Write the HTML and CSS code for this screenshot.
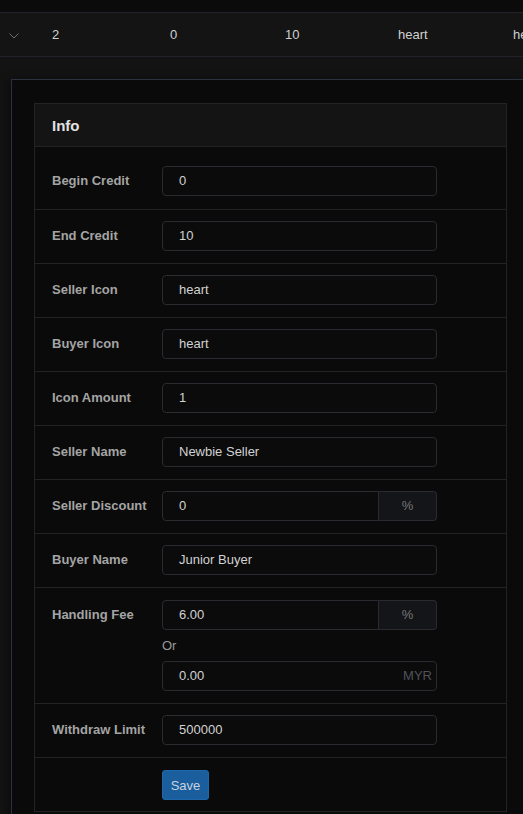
FILE: index.html
```html
<!DOCTYPE html>
<html>
<head>
<meta charset="utf-8">
<link rel="stylesheet" href="styles.css">
</head>
<body>
<div class="topbar"></div>
<div class="tablerow">
  <div class="cell chev"><svg width="10" height="6" viewBox="0 0 10 6"><path d="M0.5 0.5 L5 5 L9.5 0.5" fill="none" stroke="#6a6e75" stroke-width="1"/></svg></div>
  <div class="cell">2</div>
  <div class="cell">0</div>
  <div class="cell">10</div>
  <div class="cell">heart</div>
  <div class="cell">heart</div>
</div>
<div class="area">
  <div class="panel">
    <div class="card">
      <div class="card-head">Info</div>
      <div class="card-body">
        <div class="frow first"><label class="lbl">Begin Credit</label><div class="ctrl"><div class="inp">0</div></div></div>
        <div class="frow"><label class="lbl">End Credit</label><div class="ctrl"><div class="inp">10</div></div></div>
        <div class="frow"><label class="lbl">Seller Icon</label><div class="ctrl"><div class="inp">heart</div></div></div>
        <div class="frow"><label class="lbl">Buyer Icon</label><div class="ctrl"><div class="inp">heart</div></div></div>
        <div class="frow"><label class="lbl">Icon Amount</label><div class="ctrl"><div class="inp">1</div></div></div>
        <div class="frow"><label class="lbl">Seller Name</label><div class="ctrl"><div class="inp">Newbie Seller</div></div></div>
        <div class="frow"><label class="lbl">Seller Discount</label><div class="ctrl"><div class="group"><div class="inp gi">0</div><div class="addon">%</div></div></div></div>
        <div class="frow"><label class="lbl">Buyer Name</label><div class="ctrl"><div class="inp">Junior Buyer</div></div></div>
        <div class="frow fee"><label class="lbl">Handling Fee</label><div class="ctrl">
          <div class="group"><div class="inp gi">6.00</div><div class="addon">%</div></div>
          <div class="or">Or</div>
          <div class="inp suffix"><span>0.00</span><span class="unit">MYR</span></div>
        </div></div>
        <div class="frow"><label class="lbl">Withdraw Limit</label><div class="ctrl"><div class="inp">500000</div></div></div>
        <div class="frow last"><div class="lbl"></div><div class="ctrl"><button class="btn">Save</button></div></div>
      </div>
    </div>
  </div>
</div>
</body>
</html>
```
FILE: styles.css
```css
html, body {
  margin: 0;
  padding: 0;
  background: #131313;
  font-family: "Liberation Sans", Arial, sans-serif;
  font-size: 13px;
  color: #d2d2d2;
  overflow: hidden;
  height: 814px;
}
.topbar {
  height: 12px;
  background: #0b0b0c;
  border-bottom: 1px solid #1f2329;
}
.tablerow {
  display: grid;
  grid-template-columns: 52px 118px 115px 113px 115px 200px;
  height: 43px;
  align-items: center;
  background: #141414;
  border-bottom: 1px solid #1f2329;
  white-space: nowrap;
  color: #d0d0d0;
}
.chev {
  padding-left: 9px;
  display: flex;
  align-items: center;
  padding-top: 2px;
}
.area {
  padding: 22px 0 0 11px;
}
.panel {
  background: #0a0a0a;
  border-top: 1px solid #2a3140;
  border-left: 1px solid #2a3140;
  padding: 23px 0 0 22px;
  height: 760px;
  box-shadow: -4px 0 8px rgba(0,0,0,0.35);
}
.card {
  width: 471px;
  border: 1px solid #222325;
  background: #0a0a0a;
}
.card-head {
  box-sizing: border-box;
  height: 43px;
  line-height: 40px;
  padding-top: 2px;
  background: #141414;
  border-bottom: 1px solid #222325;
  padding-left: 17px;
  font-weight: bold;
  font-size: 15px;
  color: #e2e2e2;
}
.card-body {
  padding-top: 8px;
}
.frow {
  display: flex;
  align-items: center;
  padding: 11px 0 12px 17px;
  border-bottom: 1px solid #222325;
}
.frow.first {
  padding-bottom: 13px;
}
.frow.last {
  border-bottom: none;
  padding-top: 12px;
  padding-bottom: 11px;
}
.frow.fee {
  align-items: flex-start;
  padding-top: 12px;
}
.lbl {
  width: 110px;
  font-weight: bold;
  color: #a4a4a4;
  font-size: 13px;
  line-height: 30px;
}
.ctrl {
  width: 275px;
}
.inp {
  box-sizing: border-box;
  height: 30px;
  line-height: 28px;
  border: 1px solid #2a2a30;
  border-radius: 4px;
  background: #0b0b0c;
  padding: 0 16px;
  color: #d2d2d2;
}
.group {
  display: flex;
  height: 30px;
}
.inp.gi {
  flex: 1;
  border-radius: 4px 0 0 4px;
}
.addon {
  box-sizing: border-box;
  width: 58px;
  height: 30px;
  line-height: 28px;
  text-align: center;
  border: 1px solid #2a2a30;
  border-left: none;
  border-radius: 0 4px 4px 0;
  background: #141518;
  color: #777;
}
.or {
  margin: 8px 0 7px;
  line-height: 16px;
  color: #9a9a9a;
}
.inp.suffix {
  display: flex;
  justify-content: space-between;
  padding-right: 4px;
}
.unit {
  color: #505257;
}
.btn {
  height: 30px;
  width: 47px;
  padding: 0;
  border: 1px solid #1d68ad;
  border-radius: 3px;
  background: #1a5e9e;
  color: #c8d3df;
  font-family: "Liberation Sans", Arial, sans-serif;
  font-size: 13px;
}
```
